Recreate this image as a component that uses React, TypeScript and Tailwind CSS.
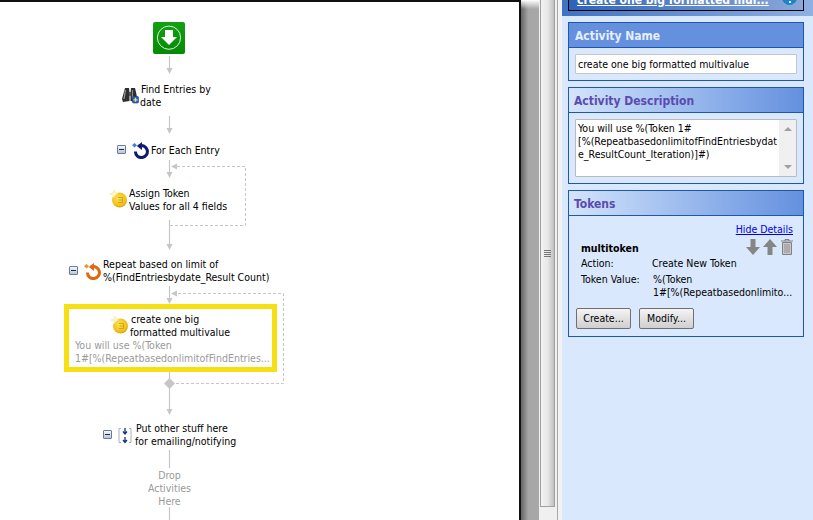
import type { ReactNode } from 'react'

const font = { fontFamily: '"DejaVu Sans Condensed", "DejaVu Sans", sans-serif', fontStretch: 'condensed' }

function Node({ x, y, w, children, className = '' }: { x: number; y: number; w?: number; children: ReactNode; className?: string }) {
  // nodes on the workflow canvas
  return (
    <div className={`absolute whitespace-nowrap ${className}`} style={{ left: x, top: y, width: w }}>
      {children}
    </div>
  )
}

function Collapse({ x, y }: { x: number; y: number }) {
  return (
    <Node x={x} y={y} className="flex h-[9px] w-[9px] items-center justify-center rounded-[1px] border border-[#6a7c9c] bg-gradient-to-b from-[#f4f7fb] to-[#b9c6d8]">
      <span className="block h-px w-[5px] bg-[#1c2c50]" />
    </Node>
  )
}

function Coin({ x, y }: { x: number; y: number }) {
  return (
    <svg className="absolute" style={{ left: x, top: y }} width="18" height="18" viewBox="0 0 18 18">
      <defs>
        <radialGradient id={`coin${x}`} cx="0.45" cy="0.4" r="0.7">
          <stop offset="0" stopColor="#ffe45a" />
          <stop offset="0.7" stopColor="#efbe16" />
          <stop offset="1" stopColor="#b98a06" />
        </radialGradient>
      </defs>
      <circle cx="9.5" cy="10" r="7.5" fill={`url(#coin${x})`} />
      <path d="M8 7.5 H12.5 V12.5 H8 M8.5 10 H12" fill="none" stroke="#d2a314" strokeWidth="1" />
      <path d="M4 0 L5.2 2.8 L8 4 L5.2 5.2 L4 8 L2.8 5.2 L0 4 L2.8 2.8 Z" fill="#fff8d0" stroke="#f3dc80" strokeWidth="0.5" />
    </svg>
  )
}

function Loop({ x, y, color, dot }: { x: number; y: number; color: string; dot: string }) {
  return (
    <svg className="absolute" style={{ left: x, top: y }} width="17" height="17" viewBox="0 0 17 17">
      <path d="M7 4.1 A6 6 0 1 1 3.4 9.5" fill="none" stroke={color} strokeWidth="3" />
      <path d="M10 0 L10 8 L4.8 4 Z" fill={color} />
      <path d="M2.5 1 L5 3.2 L2.5 5.4 L0 3.2 Z" fill={dot} />
    </svg>
  )
}

function Connectors() {
  const solid = '#c6c6c6'
  const head = (x: number, y: number) => <path d={`M${x - 3} ${y - 6} L${x + 3} ${y - 6} L${x} ${y} Z`} fill={solid} />
  const lines = [
    [56, 74],
    [116, 134],
    [160, 178],
    [220, 250],
    [286, 304],
    [372, 415],
  ]
  return (
    <svg className="absolute left-0 top-0" width="519" height="520">
      {lines.map(([a, b]) => (
        <g key={a}>
          <path d={`M169.5 ${a} V${b - 4}`} stroke={solid} strokeWidth="1.2" />
          {head(169.5, b)}
        </g>
      ))}
      <path d="M169.5 450 V468 M169.5 507 V520" stroke={solid} strokeWidth="1.2" />
      <path d="M170 225.5 H245.5 V166.5 H176" fill="none" stroke={solid} strokeDasharray="3 2" />
      <path d="M171 166.5 L177 163.5 L177 169.5 Z" fill={solid} />
      <path d="M178 293.5 H283.5 V383.5 H176" fill="none" stroke={solid} strokeDasharray="3 2" />
      <path d="M171 293.5 L177 290.5 L177 296.5 Z" fill={solid} />
      <path d="M169.5 378 L175 383.5 L169.5 389 L164 383.5 Z" fill={solid} />
    </svg>
  )
}

function Canvas() {
  return (
    <div className="relative h-full w-[521px] shrink-0 overflow-hidden border-r-2 border-t-2 border-[#111] bg-white text-[10.5px] leading-[13px] text-black">
      <div className="relative -top-[2px] h-[520px] w-[519px]">
        <Connectors />

        <svg className="absolute left-[153px] top-[22px]" width="32" height="32" viewBox="0 0 32 32">
          <defs>
            <linearGradient id="start" x1="0" y1="0" x2="0" y2="1">
              <stop offset="0" stopColor="#14a014" />
              <stop offset="1" stopColor="#068a06" />
            </linearGradient>
          </defs>
          <rect width="32" height="32" rx="2" fill="url(#start)" />
          <circle cx="16" cy="15.7" r="11.6" fill="none" stroke="#d9f0d9" strokeWidth="1" />
          <path d="M12 8 H20 V15 H24 L16 23 L8 15 H12 Z" fill="#fff" />
        </svg>

        <svg className="absolute left-[122px] top-[87px]" width="17" height="17" viewBox="0 0 17 17">
          <path d="M3 1 H7 L7.5 6 V14 L1 15 L0 12 Z" fill="#2e2e2e" />
          <path d="M9 1 H13 L15.5 12 L14.5 15 L8.5 14 V6 Z" fill="#2e2e2e" />
          <path d="M7 5 H9 V9 H7 Z" fill="#555" />
          <path d="M3.5 3 L2 12" stroke="#9a9a9a" strokeWidth="1.2" />
          <path d="M10.5 3 L10.5 12" stroke="#8a8a8a" strokeWidth="1.2" />
          <rect x="10.5" y="9.5" width="6" height="6.5" rx="1" fill="#2a5fd0" stroke="#123a90" strokeWidth="0.6" />
          <path d="M13.5 10.8 V14.8 M11.5 12.8 H15.5" stroke="#f5e94a" strokeWidth="1.2" />
        </svg>
        <Node x={141} y={83}>Find Entries by<br /><span className="-ml-px">date</span></Node>

        <Collapse x={117} y={145} />
        <Loop x={132} y={142} color="#101a6e" dot="#3f7fe0" />
        <Node x={151} y={144}>For Each Entry</Node>

        <Coin x={110} y={190} />
        <Node x={129} y={187}>Assign Token<br />Values for all 4 fields</Node>

        <Collapse x={69} y={266} />
        <Loop x={84} y={263} color="#dd6a10" dot="#e8962c" />
        <Node x={103} y={258}>Repeat based on limit of<br />%(FindEntriesbydate_Result Count)</Node>

        <div className="absolute left-[64px] top-[304px] h-[68px] w-[213px] border-[5px] border-[#f7e011] bg-white" />
        <Coin x={111} y={316} />
        <Node x={131} y={313}>create one big<br /><span className="-ml-px">formatted multivalue</span></Node>
        <Node x={75} y={339} className="text-[#9a9a9a]">You will use %(Token<br />1#[%(RepeatbasedonlimitofFindEntries...</Node>

        <Collapse x={103} y={430} />
        <svg className="absolute left-[118px] top-[427px]" width="14" height="17" viewBox="0 0 14 17">
          <path d="M3 1.5 H1 V15.5 H3 M11 1.5 H13 V15.5 H11" fill="none" stroke="#a8aeb6" />
          <path d="M7 1 V6 M5 4.5 L7 7 L9 4.5 M7 10 V15 M5 13 L7 15.5 L9 13" fill="none" stroke="#12357f" strokeWidth="1.3" />
        </svg>
        <Node x={136} y={422}>Put other stuff here<br /><span className="-ml-px">for emailing/notifying</span></Node>

        <Node x={139} y={469} w={61} className="text-center text-[#9a9a9a]">Drop<br />Activities<br />Here</Node>
      </div>
    </div>
  )
}

function Section({ title, light, children, className }: { title: string; light?: boolean; children: ReactNode; className: string }) {
  return (
    <section className={`border border-[#1c58b0] ${className}`}>
      <div
        className={
          light
            ? 'flex h-[25px] items-center border-b border-[#1c58b0] bg-gradient-to-r from-[#d4e4fa] to-[#6490de] px-[5px] pt-[2px] text-[12px] font-bold text-[#5a4bb0]'
            : 'flex h-[25px] items-center border-b border-[#1c58b0] bg-[#6490de] px-[6px] pt-[2px] text-[12px] font-bold text-[#e6efff]'
        }
      >
        {title}
      </div>
      {children}
    </section>
  )
}

function WinButton({ children, width }: { children: ReactNode; width: string }) {
  return (
    <button className={`h-[21px] rounded-[2px] border border-[#707070] bg-gradient-to-b from-[#f4f4f4] to-[#cfcfcf] text-[10.5px] text-black ${width}`}>
      {children}
    </button>
  )
}

function Panel() {
  return (
    <div className="flex min-w-0 flex-1 flex-col gap-[6px] bg-[#d9e8fc] text-[10.5px] leading-[13px] text-black">
      <div className="h-[16px] bg-gradient-to-r from-[#3f72c4] to-[#8fb0e2] px-[6px]">
        <div className="relative h-[11px] w-[236px] overflow-hidden border-x border-b border-black bg-gradient-to-r from-[#2e62b8] to-[#8aa8d8]">
          <span className="absolute left-[8px] top-[-8px] whitespace-nowrap text-[12px] leading-[16px] font-bold text-white underline">create one big formatted mul...</span>
          <span className="absolute right-[6px] top-[-10px] flex h-[15px] w-[15px] items-end justify-center rounded-full bg-[#1c84c8] pb-[2px]">
            <span className="block h-[2px] w-[2px] bg-white" />
          </span>
        </div>
      </div>

      <div className="flex flex-col gap-[6px] pl-[6px] pr-[9px]">
        <Section title="Activity Name" className="h-[59px]">
          <div className="px-[6px] pt-[6px]">
            <div className="flex h-[20px] items-center rounded-[1px] border border-[#c4c8cc] bg-white px-[2px]">create one big formatted multivalue</div>
          </div>
        </Section>

        <Section title="Activity Description" light className="h-[97px]">
          <div className="px-[6px] pt-[6px]">
            <div className="flex h-[58px] rounded-[1px] border border-[#b8bcc0] bg-white">
              <div className="min-w-0 flex-1 whitespace-nowrap pl-[2px] pt-[2px]">
                You will use %(Token 1#<br />[%(RepeatbasedonlimitofFindEntriesbydat<br />e_ResultCount_Iteration)]#)
              </div>
              <div className="flex w-[17px] flex-col items-center justify-between bg-[#f0f0f0] py-[7px]">
                <span className="h-0 w-0 border-x-[4px] border-b-[4px] border-x-transparent border-b-[#a0a0a0]" />
                <span className="h-0 w-0 border-x-[4px] border-t-[4px] border-x-transparent border-t-[#a0a0a0]" />
              </div>
            </div>
          </div>
        </Section>

        <Section title="Tokens" light className="h-[147px]">
          <div className="flex justify-end pr-[10px] pt-[7px]">
            <a className="text-[#0000ee] underline">Hide Details</a>
          </div>
          <div className="mt-[4px] flex pl-[12px] pr-[9px]">
            <div className="flex-1 pt-[2px] font-bold">multitoken</div>
            <div className="-mt-[1px] flex gap-[3px]">
              <svg width="14" height="16" viewBox="0 0 14 16"><path d="M4.5 0 H9.5 V8 H14 L7 16 L0 8 H4.5 Z" fill="#858585" /></svg>
              <svg width="14" height="16" viewBox="0 0 14 16"><path d="M4.5 16 H9.5 V8 H14 L7 0 L0 8 H4.5 Z" fill="#858585" /></svg>
              <svg width="14" height="16" viewBox="0 0 14 16">
                <path d="M1 2 H13 M5 2 V0.5 H9 V2" fill="none" stroke="#808080" />
                <path d="M2.5 3.5 H11.5 V15.5 H2.5 Z" fill="#c8c8c8" stroke="#808080" />
                <path d="M5 5 V14 M7 5 V14 M9 5 V14" stroke="#909090" />
              </svg>
            </div>
          </div>
          <div className="mt-[2px] grid grid-cols-[71px_1fr] gap-y-[3px] whitespace-nowrap pl-[12px]">
            <div>Action:</div>
            <div>Create New Token</div>
            <div>Token Value:</div>
            <div className="pl-px">%(Token<br />1#[%(Repeatbasedonlimito...</div>
          </div>
          <div className="mt-[9px] flex gap-[8px] pl-[7px]">
            <WinButton width="w-[55px]">Create...</WinButton>
            <WinButton width="w-[55px]">Modify...</WinButton>
          </div>
        </Section>
      </div>
    </div>
  )
}

function Splitter() {
  return (
    <div className="flex h-full shrink-0">
      <div className="h-full w-[18px] bg-gradient-to-r from-[#666] via-[#a6a6a6] via-40% to-[#a8a8a8]">
        <div className="h-[9px] bg-gradient-to-b from-white to-transparent" />
      </div>
      <div className="flex h-full w-[18px] flex-col bg-[#f0f0f0] pl-px pr-[2px]">
        <div className="flex h-[507px] items-center justify-center border-x border-b border-[#a0a0a0] bg-gradient-to-r from-[#f2f2f2] via-[#e8e8e8] to-[#c0c0c0]">
          <div className="flex flex-col gap-px">
            <span className="block h-px w-[7px] bg-[#777]" />
            <span className="block h-px w-[7px] bg-[#777]" />
            <span className="block h-px w-[7px] bg-[#777]" />
            <span className="block h-px w-[7px] bg-[#777]" />
          </div>
        </div>
      </div>
      <div className="h-full w-[5px] border-l border-[#a8a8a8] bg-[#f2f2f2]" />
    </div>
  )
}

export default function App() {
  return (
    <div className="flex h-[520px] w-[813px] overflow-hidden bg-white" style={font}>
      <Canvas />
      <Splitter />
      <Panel />
    </div>
  )
}
